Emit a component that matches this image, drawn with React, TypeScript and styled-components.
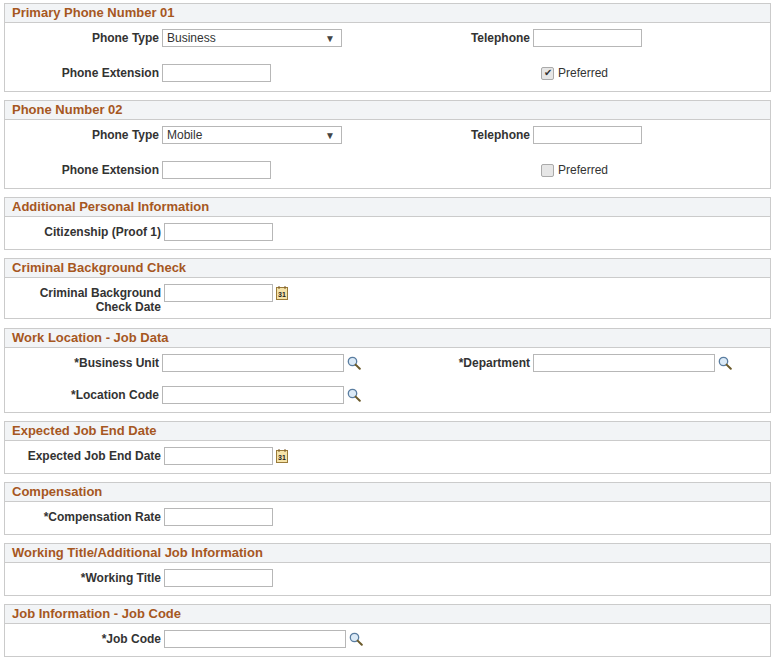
import React from 'react';
import styled, { createGlobalStyle } from 'styled-components';

const Global = createGlobalStyle`
  body { margin: 0; background: #fff; font-family: Arial, "Liberation Sans", sans-serif; font-size: 12px; color: #333; }
`;

const Page = styled.div`
  padding: 3px 2px 0 4px;
  display: flex;
  flex-direction: column;
  gap: 8px;
`;

const Section = styled.div`
  border: 1px solid #cbcbcb;
  width: 765px;
`;

const Header = styled.div`
  height: 18px;
  background: #f2f4f6;
  border-bottom: 1px solid #cbcbcb;
  color: #a6571f;
  font-weight: bold;
  font-size: 13px;
  line-height: 18px;
  padding-left: 7px;
`;

const Body = styled.div<{ $gap: number; $pb: number }>`
  display: flex;
  flex-direction: column;
  gap: ${p => p.$gap}px;
  padding: 6px 0 ${p => p.$pb}px;
`;

const Row = styled.div`
  display: flex;
  align-items: flex-start;
  min-height: 18px;
`;

const Cell = styled.div<{ $w: number }>`
  width: ${p => p.$w}px;
  display: flex;
  align-items: flex-start;
`;

const Label = styled.div<{ $w: number }>`
  width: ${p => p.$w}px;
  text-align: right;
  font-weight: bold;
  padding-right: 3px;
  line-height: 18px;
  flex-shrink: 0;
  box-sizing: border-box;
`;

const Input = styled.div<{ $w: number }>`
  width: ${p => p.$w}px;
  height: 18px;
  border: 1px solid #b7b7b7;
  box-sizing: border-box;
  background: #fff;
  font-size: 12px;
  line-height: 15px;
  padding-left: 4px;
  display: flex;
  justify-content: space-between;
  align-items: center;
`;

const Arrow = styled.span`
  font-size: 10px;
  color: #444;
  padding-right: 6px;
`;

const Icon = styled.span`
  margin-left: 3px;
  display: inline-flex;
  align-items: center;
  height: 18px;
`;

const Check = styled.div`
  margin-left: 536px;
  display: flex;
  align-items: center;
  gap: 4px;
  line-height: 18px;
  color: #333;
`;

const Box = styled.span`
  width: 11px;
  height: 11px;
  border: 1px solid #aaa;
  border-radius: 2px;
  background: #e6e6e6;
  display: inline-flex;
  align-items: center;
  justify-content: center;
  font-size: 10px;
  color: #333;
`;

const Lens = () => (
  <Icon>
    <svg width="14" height="14" viewBox="0 0 14 14">
      <circle cx="5.5" cy="5.5" r="4.2" fill="#dbeaf7" stroke="#5a7da0" strokeWidth="1.3" />
      <line x1="8.6" y1="8.6" x2="12.8" y2="12.8" stroke="#6b5a2a" strokeWidth="2" strokeLinecap="round" />
    </svg>
  </Icon>
);

const Cal = () => (
  <Icon>
    <svg width="13" height="14" viewBox="0 0 13 14">
      <rect x="0.5" y="1.5" width="11" height="12" fill="#f5e3a8" stroke="#9a7b3a" />
      <line x1="3" y1="0" x2="3" y2="3" stroke="#7a5a2a" />
      <line x1="9" y1="0" x2="9" y2="3" stroke="#7a5a2a" />
      <text x="6" y="11" fontSize="7" fontWeight="bold" textAnchor="middle" fill="#222" fontFamily="Arial">31</text>
    </svg>
  </Icon>
);

const Phone = ({ title, type, on }: { title: string; type: string; on?: boolean }) => (
  <Section>
    <Header>{title}</Header>
    <Body $gap={17} $pb={9}>
      <Row>
        <Cell $w={371}>
          <Label $w={157}>Phone Type</Label>
          <Input $w={180}>{type}<Arrow>▼</Arrow></Input>
        </Cell>
        <Label $w={157}>Telephone</Label>
        <Input $w={109} />
      </Row>
      <Row>
        <Cell $w={371}>
          <Label $w={157}>Phone Extension</Label>
          <Input $w={109} />
        </Cell>
      </Row>
      <Row style={{ marginTop: -35 }}>
        <Check><Box>{on ? '✔' : ''}</Box>Preferred</Check>
      </Row>
    </Body>
  </Section>
);

const Simple = ({ title, label, icon }: { title: string; label: string; icon?: 'lens' | 'cal' }) => (
  <Section>
    <Header>{title}</Header>
    <Body $gap={0} $pb={8}>
      <Row>
        <Label $w={159}>{label}</Label>
        <Input $w={icon === 'lens' ? 182 : 109} />
        {icon === 'lens' && <Lens />}
        {icon === 'cal' && <Cal />}
      </Row>
    </Body>
  </Section>
);

export default function App() {
  return (
    <>
      <Global />
      <Page>
        <Phone title="Primary Phone Number 01" type="Business" on />
        <Phone title="Phone Number 02" type="Mobile" />
        <Simple title="Additional Personal Information" label="Citizenship (Proof 1)" />
        <Section>
          <Header>Criminal Background Check</Header>
          <Body $gap={0} $pb={4}>
            <Row>
              <Label $w={159} style={{ lineHeight: '14px', paddingTop: 2 }}>Criminal Background<br />Check Date</Label>
              <Input $w={109} />
              <Cal />
            </Row>
          </Body>
        </Section>
        <Section style={{ marginTop: 1 }}>
          <Header>Work Location - Job Data</Header>
          <Body $gap={14} $pb={8}>
            <Row>
              <Cell $w={371}>
                <Label $w={157}>*Business Unit</Label>
                <Input $w={182} />
                <Lens />
              </Cell>
              <Label $w={157}>*Department</Label>
              <Input $w={182} />
              <Lens />
            </Row>
            <Row>
              <Label $w={157}>*Location Code</Label>
              <Input $w={182} />
              <Lens />
            </Row>
          </Body>
        </Section>
        <Simple title="Expected Job End Date" label="Expected Job End Date" icon="cal" />
        <Simple title="Compensation" label="*Compensation Rate" />
        <Simple title="Working Title/Additional Job Information" label="*Working Title" />
        <Simple title="Job Information - Job Code" label="*Job Code" icon="lens" />
      </Page>
    </>
  );
}
